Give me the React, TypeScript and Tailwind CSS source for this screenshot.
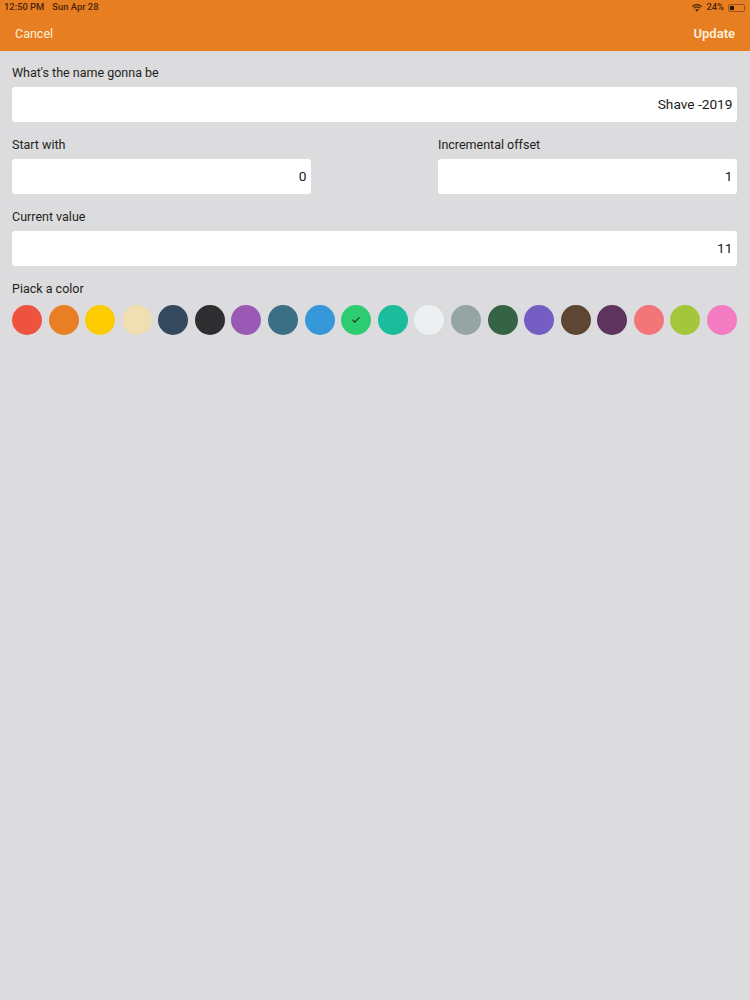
import { Check } from "lucide-react";

const colors = [
  "#ee5340", "#e87f24", "#fdcc03", "#f0dfb3", "#34495e", "#2e2d30", "#9b59b6",
  "#3a6f85", "#3498db", "#2ecc71", "#1abc9c", "#ecf0f1", "#95a5a6", "#366345",
  "#745ec4", "#5e4632", "#5e345e", "#f2757a", "#a5c63b", "#f47cc3",
];

function Field({ label, value }: { label: string; value: string }) {
  return (
    <div className="flex flex-col">
      <label className="h-[36px] pt-[14px] text-[12.5px] leading-[15px] text-[#1f1f21]">{label}</label>
      <div className="mb-[1px] flex h-[35px] items-center justify-end rounded-[3px] bg-white pr-[4.5px] pb-[1px] text-[13.7px] text-[#1a1a1a]">
        {value}
      </div>
    </div>
  );
}

export default function App() {
  return (
    <div className="flex h-[1000px] w-[750px] flex-col bg-[#dcdbdd] font-['Roboto',sans-serif]">
      <header className="flex h-[51px] flex-col bg-[#e87e22] pr-[5px] pl-[4px]">
        <div className="flex h-[14px] items-center justify-between text-[9.4px] font-medium text-[#4a2408]">
          <div className="flex gap-[8px] pt-[1px]">
            <span>12:50 PM</span>
            <span>Sun Apr 28</span>
          </div>
          <div className="flex items-center gap-[4px] pt-[1px]">
            <svg width="10" height="8" viewBox="0 0 12 9" fill="#4a2408">
              <path d="M6 9 3.9 6.6a3 3 0 0 1 4.2 0L6 9Z" />
              <path d="M2.8 5.4 1.7 4.2a6 6 0 0 1 8.6 0L9.2 5.4a4.5 4.5 0 0 0-6.4 0Z" />
              <path d="M1 3.4 0 2.3a8.4 8.4 0 0 1 12 0l-1 1.1a7 7 0 0 0-10 0Z" />
            </svg>
            <span>24%</span>
            <div className="flex h-[8px] w-[17px] items-stretch rounded-[2px] border border-[#4a2408]/50 p-[1px]">
              <div className="w-[4px] bg-[#2a1505]" />
            </div>
          </div>
        </div>
        <div className="flex flex-1 items-center justify-between pr-[10px] pl-[11px] pt-[3px] text-[12.5px] text-[#fdf0dc]">
          <span>Cancel</span>
          <span className="text-[13px] font-semibold">Update</span>
        </div>
      </header>

      <main className="flex flex-col pr-[13px] pl-[12px]">
        <Field label="What's the name gonna be" value="Shave -2019" />
        <div className="grid grid-cols-[299px_299px] justify-between">
          <Field label="Start with" value="0" />
          <Field label="Incremental offset" value="1" />
        </div>
        <Field label="Current value" value="11" />
        <div className="h-[38px] pt-[14px] text-[12.5px] leading-[15px] text-[#1f1f21]">Piack a color</div>
        <div className="flex justify-between">
          {colors.map((color, i) => (
            <div
              key={color}
              className="flex h-[30px] w-[30px] items-center justify-center rounded-full"
              style={{ backgroundColor: color }}
            >
              {i === 9 && <Check size={10} strokeWidth={2.5} className="text-[#10261a]" />}
            </div>
          ))}
        </div>
      </main>
    </div>
  );
}
